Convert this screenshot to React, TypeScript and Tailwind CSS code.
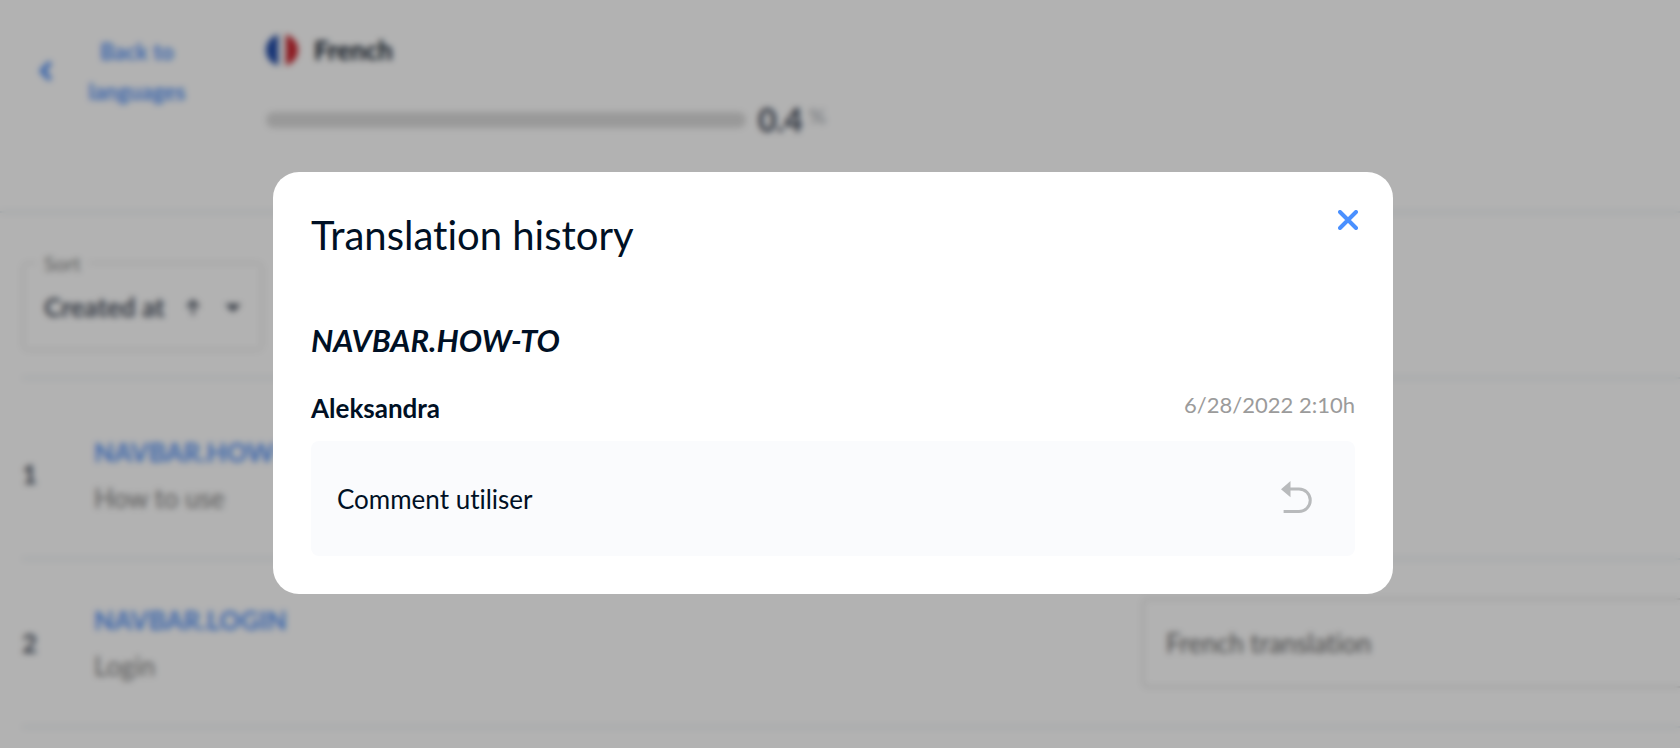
import React from "react";

type Row = { id: number; name: string; source: string; editable: boolean };

const rows: Row[] = [
  { id: 1, name: "NAVBAR.HOW-TO", source: "How to use", editable: false },
  { id: 2, name: "NAVBAR.LOGIN", source: "Login", editable: true },
];

function FrenchFlag() {
  return (
    <svg viewBox="0 0 32 32" className="size-8" aria-hidden="true">
      <defs>
        <clipPath id="flag-circle">
          <circle cx="16" cy="16" r="16" />
        </clipPath>
      </defs>
      <g clipPath="url(#flag-circle)">
        <rect width="32" height="32" fill="#f5f5f5" />
        <rect width="12" height="32" fill="#1f4aa8" />
        <rect x="20" width="12" height="32" fill="#c9252f" />
      </g>
    </svg>
  );
}

function UndoIcon() {
  return (
    <svg viewBox="0 0 31 33" className="h-[33px] w-[31px]" fill="none" aria-hidden="true">
      <path d="M0 8.3 L9.5 0 V16.3 Z" fill="#b8babc" />
      <path d="M9 8 H18 A11 11 0 0 1 18 30.5 H2.6" stroke="#b8babc" strokeWidth="3" />
    </svg>
  );
}

function Header() {
  return (
    <header className="flex h-[213px] items-start border-b-2 border-[#e6ecf0] pl-9">
      <a href="#languages" className="mt-8 flex w-[230px] items-center text-[#5492f7]">
        <svg viewBox="0 0 18 22" className="mb-0.5 h-[22px] w-[18px]" fill="none" aria-hidden="true">
          <path d="M13 4 L6 11 L13 18" stroke="currentColor" strokeWidth="5" strokeLinecap="round" strokeLinejoin="round" />
        </svg>
        <span className="ml-7 w-[110px] text-center text-[22px] leading-10 font-bold">
          Back to languages
        </span>
      </a>
      <div className="mt-8">
        <div className="flex items-center gap-4">
          <FrenchFlag />
          <h1 className="text-[26px] leading-9 font-bold text-[#0b1626]">French</h1>
        </div>
        <div className="mt-8 flex items-center gap-3">
          <div className="h-4 w-[480px] rounded-full bg-[#dcdcdc]" />
          <p className="flex items-start gap-1.5 text-[32px] leading-10 font-bold text-[#3f4858]">
            0.4 <span className="text-[22px] leading-8 font-normal text-[#a5a9b0]">%</span>
          </p>
        </div>
      </div>
    </header>
  );
}

function SortField() {
  return (
    <fieldset className="relative h-[98px] w-[241px] rounded-md border-2 border-[#e6e6e6] px-3">
      <legend className="px-2 text-xl leading-5 text-[#808080]">
        <label htmlFor="sort">Sort</label>
      </legend>
      <select
        id="sort"
        className="mt-3 h-11 w-full appearance-none bg-transparent px-2 text-[26px] font-bold text-[#4a5260]"
      >
        <option>Created at</option>
      </select>
      <div className="pointer-events-none absolute top-[26px] right-5 flex items-center gap-6 text-[#4a5260]">
        <svg viewBox="0 0 16 18" className="h-[18px] w-4" fill="none" aria-hidden="true">
          <path d="M8 16 V3 M2 8 L8 2 L14 8" stroke="currentColor" strokeWidth="2.5" />
        </svg>
        <svg viewBox="0 0 16 8" className="h-2 w-4" aria-hidden="true">
          <path d="M0 0 H16 L8 8 Z" fill="currentColor" />
        </svg>
      </div>
    </fieldset>
  );
}

function TranslationTable() {
  return (
    <table className="mt-[26px] w-full table-fixed border-collapse border-t-2 border-[#e6ecf0]">
      <tbody>
        {rows.map((row) => (
          <tr key={row.id} className="h-[168px] border-b-2 border-[#e6ecf0] first:h-[181px] first:*:pt-3">
            <td className="w-[72px] text-[26px] font-bold text-[#4a5260]">{row.id}</td>
            <td>
              <a href={"#" + row.name} className="block text-[26px] leading-[46px] font-bold text-[#5492f7]">
                {row.name}
              </a>
              <span className="block text-[26px] leading-[46px] text-[#808080]">{row.source}</span>
            </td>
            <td className="w-[538px]">
              {row.editable && (
                <input
                  aria-label={"French translation of " + row.name}
                  placeholder="French translation"
                  className="h-[90px] w-full rounded-l-md border-2 border-r-0 border-[#e0e0e0] px-[22px] text-[26px] placeholder:text-[#666666]"
                />
              )}
            </td>
          </tr>
        ))}
      </tbody>
    </table>
  );
}

function HistoryDialog() {
  return (
    <div className="fixed inset-0 flex items-start justify-center overflow-hidden bg-black/30 pt-[172px] pr-[14px] backdrop-blur-[3px]">
      <section
        role="dialog"
        aria-modal="true"
        aria-labelledby="history-title"
        className="relative w-full max-w-[1120px] rounded-[26px] bg-white px-[38px] pt-10 pb-[38px] text-[#001024]"
      >
        <button type="button" aria-label="Close" className="absolute top-8 right-[29px] p-1.5 text-[#4a90ff]">
          <svg viewBox="0 0 20 20" className="size-5" fill="none" aria-hidden="true">
            <path d="M2 2 L18 18 M18 2 L2 18" stroke="currentColor" strokeWidth="4" strokeLinecap="round" />
          </svg>
        </button>
        <h2 id="history-title" className="text-[40px] leading-[46px]">
          Translation history
        </h2>
        <h3 className="mt-[62px] text-[31px] leading-10 font-bold italic">NAVBAR.HOW-TO</h3>
        <div className="mt-7 flex items-start justify-between">
          <span className="text-[26px] leading-10 font-bold">Aleksandra</span>
          <time className="text-[22px] leading-[34px] text-[#9b9b9b]">6/28/2022 2:10h</time>
        </div>
        <div className="mt-[13px] flex h-[115px] items-start justify-between rounded-lg bg-[#fafbfd] pt-10 pr-[43px] pl-[26px]">
          <p className="text-[26px] leading-9">Comment utiliser</p>
          <button type="button" aria-label="Restore this translation">
            <UndoIcon />
          </button>
        </div>
      </section>
    </div>
  );
}

export default function App() {
  return (
    <div className="min-h-screen bg-white font-['Lato',sans-serif] [font-variant-ligatures:none]">
      <Header />
      <main className="pt-10 pl-[22px]">
        <SortField />
        <TranslationTable />
      </main>
      <HistoryDialog />
    </div>
  );
}
